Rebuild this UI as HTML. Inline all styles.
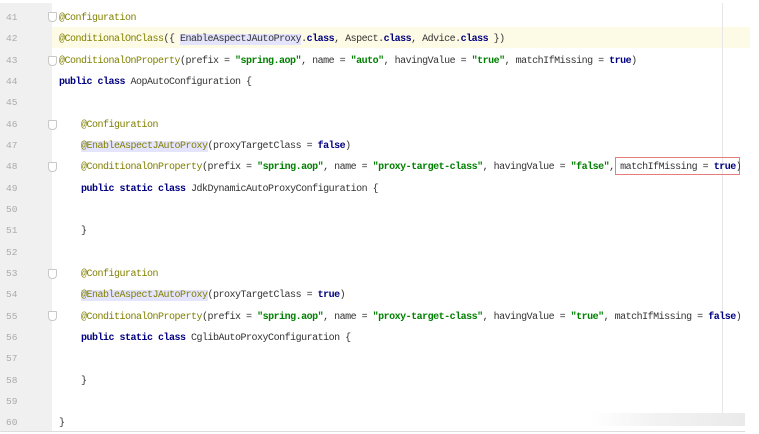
<!DOCTYPE html>
<html><head><meta charset="utf-8"><style>
html,body{margin:0;padding:0;background:#fff;}
body{width:759px;height:434px;position:relative;overflow:hidden;font-family:"Liberation Mono",monospace;font-size:10px;letter-spacing:-0.5px;}
.gut{position:absolute;left:0;top:3px;width:52px;height:428px;background:#f0f0f0;}
.ln{position:absolute;left:6px;color:#aaa;letter-spacing:0;font-size:9.5px;}
.l{position:absolute;left:59px;white-space:pre;color:#333;line-height:14px;}
.a{color:#808000}
.k{color:#000080;font-weight:bold}
.s{color:#008000;font-weight:bold}
.h{background:#e4e4ff}
.fold{position:absolute;left:48px;width:7px;height:8px;border:1px solid #c8c8c8;border-radius:1px 1px 4px 4px;background:#fff;}
</style></head><body>
<div class="gut"></div>
<div style="position:absolute;left:52px;top:27px;width:698px;height:21px;background:#fdfbe6"></div>
<div style="position:absolute;left:722px;top:3px;width:1px;height:410px;background:#e6e6e6"></div>
<div style="position:absolute;left:0;top:431px;width:745px;height:1px;background:#ddd"></div>
<div style="position:absolute;left:590px;top:413px;width:155px;height:13px;background:linear-gradient(90deg,#fff,#f3f3f3 40%,#eaeaea)"></div>
<div class="fold" style="top:12px"></div>
<div class="fold" style="top:56px"></div>
<div class="fold" style="top:120px"></div>
<div class="fold" style="top:162px"></div>
<div class="fold" style="top:269px"></div>
<div class="fold" style="top:311px"></div>
<div style="position:absolute;left:615px;top:157px;width:125px;height:18px;border:1px solid #e87b7b;box-sizing:border-box"></div>

<div class="ln" style="top:12px">41</div><div class="l" style="top:12px"><span class="a">@Configuration</span></div>
<div class="ln" style="top:33px">42</div><div class="l" style="top:33px"><span class="a">@ConditionalOnClass</span>({ <span class="h">EnableAspectJAutoProxy</span>.<span class="k">class</span>, Aspect.<span class="k">class</span>, Advice.<span class="k">class</span> })</div>
<div class="ln" style="top:55px">43</div><div class="l" style="top:55px"><span class="a">@ConditionalOnProperty</span>(prefix = <span class="s">"spring.aop"</span>, name = <span class="s">"auto"</span>, havingValue = <span class="s">"true"</span>, matchIfMissing = <span class="k">true</span>)</div>
<div class="ln" style="top:76px">44</div><div class="l" style="top:76px"><span class="k">public class</span> AopAutoConfiguration {</div>
<div class="ln" style="top:97px">45</div>
<div class="ln" style="top:119px">46</div><div class="l" style="top:119px">    <span class="a">@Configuration</span></div>
<div class="ln" style="top:140px">47</div><div class="l" style="top:140px">    <span class="a h">@EnableAspectJAutoProxy</span>(proxyTargetClass = <span class="k">false</span>)</div>
<div class="ln" style="top:161px">48</div><div class="l" style="top:161px">    <span class="a">@ConditionalOnProperty</span>(prefix = <span class="s">"spring.aop"</span>, name = <span class="s">"proxy-target-class"</span>, havingValue = <span class="s">"false"</span>, matchIfMissing = <span class="k">true</span>)</div>
<div class="ln" style="top:183px">49</div><div class="l" style="top:183px">    <span class="k">public static class</span> JdkDynamicAutoProxyConfiguration {</div>
<div class="ln" style="top:204px">50</div>
<div class="ln" style="top:225px">51</div><div class="l" style="top:225px">    }</div>
<div class="ln" style="top:247px">52</div>
<div class="ln" style="top:268px">53</div><div class="l" style="top:268px">    <span class="a">@Configuration</span></div>
<div class="ln" style="top:289px">54</div><div class="l" style="top:289px">    <span class="a h">@EnableAspectJAutoProxy</span>(proxyTargetClass = <span class="k">true</span>)</div>
<div class="ln" style="top:311px">55</div><div class="l" style="top:311px">    <span class="a">@ConditionalOnProperty</span>(prefix = <span class="s">"spring.aop"</span>, name = <span class="s">"proxy-target-class"</span>, havingValue = <span class="s">"true"</span>, matchIfMissing = <span class="k">false</span>)</div>
<div class="ln" style="top:332px">56</div><div class="l" style="top:332px">    <span class="k">public static class</span> CglibAutoProxyConfiguration {</div>
<div class="ln" style="top:353px">57</div>
<div class="ln" style="top:375px">58</div><div class="l" style="top:375px">    }</div>
<div class="ln" style="top:396px">59</div>
<div class="ln" style="top:417px">60</div><div class="l" style="top:417px">}</div>
</body></html>
